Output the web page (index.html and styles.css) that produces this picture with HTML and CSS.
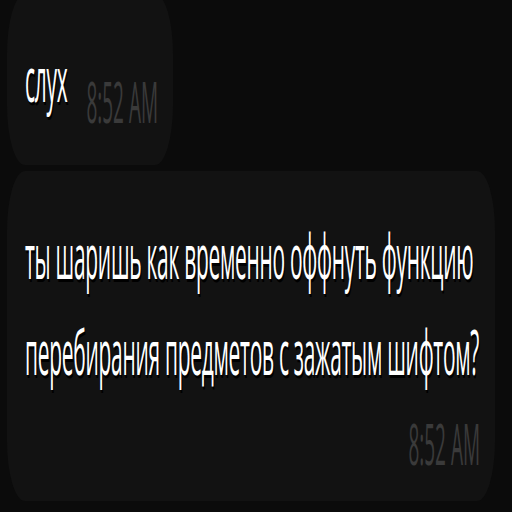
FILE: index.html
```html
<!DOCTYPE html>
<html lang="ru">
<head>
<meta charset="utf-8">
<link rel="stylesheet" href="styles.css">
</head>
<body>
<div class="stage">
  <div class="bubble bubble-short">
    <span class="text">слух</span><span class="time inline">8:52 AM</span>
  </div>
  <div class="bubble bubble-long">
    <div class="text">ты шаришь как временно оффнуть функцию перебирания предметов с зажатым шифтом?</div>
    <div class="time block">8:52 AM</div>
  </div>
</div>
</body>
</html>
```
FILE: styles.css
```css
html, body {
  margin: 0;
  padding: 0;
  width: 512px;
  height: 512px;
  overflow: hidden;
  background: #0b0b0b;
}
.stage {
  width: 512px;
  height: 171px;
  transform: scaleY(3);
  transform-origin: top left;
  display: flex;
  flex-direction: column;
  align-items: flex-start;
  gap: 2.3px;
  padding-left: 7px;
  box-sizing: border-box;
  margin-top: -6px;
  font-family: "Open Sans", "Noto Sans", sans-serif;
}
.bubble {
  background: #121212;
  border-radius: 18px / 20px;
  box-sizing: border-box;
}
.bubble-short {
  width: 166px;
  height: 57px;
  padding: 12.85px 18px 0;
  white-space: nowrap;
}
.bubble-long {
  width: 488px;
  height: 109.4px;
  padding: 13.15px 12px 0 18px;
}
.text {
  color: #ffffff;
  font-size: 21px;
  letter-spacing: -0.3px;
  line-height: 31.4px;
  text-shadow: 1px 1px 0 #000;
}
.bubble-short .text {
  line-height: 30px;
}
.time {
  color: #3a3a3a;
  font-size: 19px;
  line-height: 20px;
}
.time.inline {
  margin-left: 19px;
  vertical-align: -7.3px;
}
.time.block {
  margin-top: 5.1px;
  padding-right: 3px;
  text-align: right;
}
```
